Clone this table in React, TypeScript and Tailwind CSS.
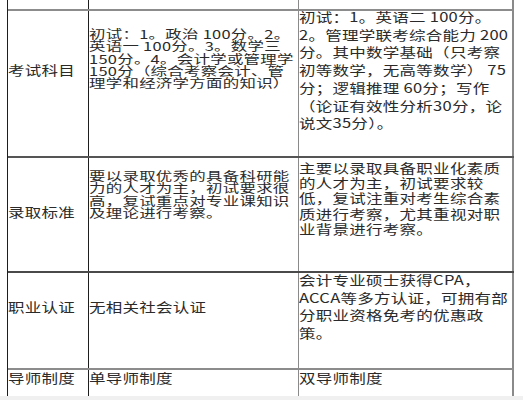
import React from 'react';

// 原图是横向拉伸过的，所以每一行文字都做 scale-x
function T({ children, tight }: { children: React.ReactNode; tight?: boolean }) {
  return (
    <div
      className={
        tight
          ? 'whitespace-nowrap origin-left scale-x-[1.37] text-[12px]'
          : 'whitespace-nowrap origin-left scale-x-[1.27]'
      }
    >
      {children}
    </div>
  );
}

function Lines({ lines, className, tight }: { lines: string[]; className: string; tight?: boolean }) {
  return (
    <div className={className}>
      {lines.map((l, i) => (
        <T key={i} tight={tight}>
          {l}
        </T>
      ))}
    </div>
  );
}

const subjectA = [
  '初试：1。政治 100分。2。',
  '英语一 100分。3。数学三',
  '150分。4。会计学或管理学',
  '150分（综合考察会计、管',
  '理学和经济学方面的知识）',
];

const subjectB = [
  '初试：1。英语二 100分。',
  '2。管理学联考综合能力 200',
  '分。其中数学基础（只考察',
  '初等数学，无高等数学） 75',
  '分；逻辑推理 60分；写作',
  '（论证有效性分析30分，论',
  '说文35分）。',
];

const admitA = [
  '要以录取优秀的具备科研能',
  '力的人才为主，初试要求很',
  '高，复试重点对专业课知识',
  '及理论进行考察。',
];

const admitB = [
  '主要以录取具备职业化素质',
  '的人才为主，初试要求较',
  '低，复试注重对考生综合素',
  '质进行考察，尤其重视对职',
  '业背景进行考察。',
];

const certB = [
  '会计专业硕士获得CPA，',
  'ACCA等多方认证，可拥有部',
  '分职业资格免考的优惠政',
  '策。',
];

function App() {
  return (
    <div
      className="w-[523px] h-[400px] bg-white overflow-hidden text-[13px] tracking-[0.2px] text-[#2a2a2a]"
      style={{ fontFamily: '"Noto Sans CJK SC", "Noto Sans", sans-serif' }}
    >
      <div className="ml-[7px] w-[507px] border-l border-[#1e1e1e] flex flex-col">
        {/* 上一行的残余 */}
        <div className="grid grid-cols-[81px_210px_215px] h-[11px] border-b-2 border-b-[#8c8c8c]">
          <div className="border-r border-r-[#1e1e1e]" />
          <div className="border-r border-r-[#8a8a8a]" />
          <div className="border-r-2 border-r-[#8a8a8a]" />
        </div>

        {/* 考试科目 */}
        <div className="grid grid-cols-[81px_210px_215px] h-[147px] border-b-2 border-b-[#555]">
          <div className="border-r border-r-[#1e1e1e] pt-[49px] leading-[20px]">
            <T>考试科目</T>
          </div>
          <div className="border-r border-r-[#8a8a8a] pt-[17px]">
            <Lines lines={subjectA} className="leading-[12.25px]" tight />
          </div>
          <div className="border-r-2 border-r-[#8a8a8a]">
            <Lines lines={subjectB} className="-mt-[3px] leading-[17.7px]" />
          </div>
        </div>

        {/* 录取标准 */}
        <div className="grid grid-cols-[81px_210px_215px] h-[115px] border-b-2 border-b-[#4a4a4a]">
          <div className="border-r border-r-[#1e1e1e] pt-[44px] leading-[20px]">
            <T>录取标准</T>
          </div>
          <div className="border-r border-r-[#8a8a8a] pt-[12px]">
            <Lines lines={admitA} className="leading-[12.25px]" tight />
          </div>
          <div className="border-r-2 border-r-[#8a8a8a] pt-[2px]">
            <Lines lines={admitB} className="leading-[15.2px]" />
          </div>
        </div>

        {/* 职业认证 */}
        <div className="grid grid-cols-[81px_210px_215px] h-[97px] border-b-2 border-b-[#8c8c8c]">
          <div className="border-r border-r-[#1e1e1e] pt-[24px] leading-[20px]">
            <T>职业认证</T>
          </div>
          <div className="border-r border-r-[#8a8a8a] pt-[24px] leading-[20px]">
            <T>无相关社会认证</T>
          </div>
          <div className="border-r-2 border-r-[#8a8a8a]">
            <Lines lines={certB} className="-mt-[2px] leading-[17.7px]" />
          </div>
        </div>

        {/* 导师制度 */}
        <div className="grid grid-cols-[81px_210px_215px] h-[26px] leading-[16px]">
          <div className="border-r border-r-[#1e1e1e]">
            <T>导师制度</T>
          </div>
          <div className="border-r border-r-[#8a8a8a]">
            <T>单导师制度</T>
          </div>
          <div className="border-r-2 border-r-[#8a8a8a]">
            <T>双导师制度</T>
          </div>
        </div>
      </div>
      <div className="h-[4px] bg-[#f0f0f0]" />
    </div>
  );
}

export default App;
